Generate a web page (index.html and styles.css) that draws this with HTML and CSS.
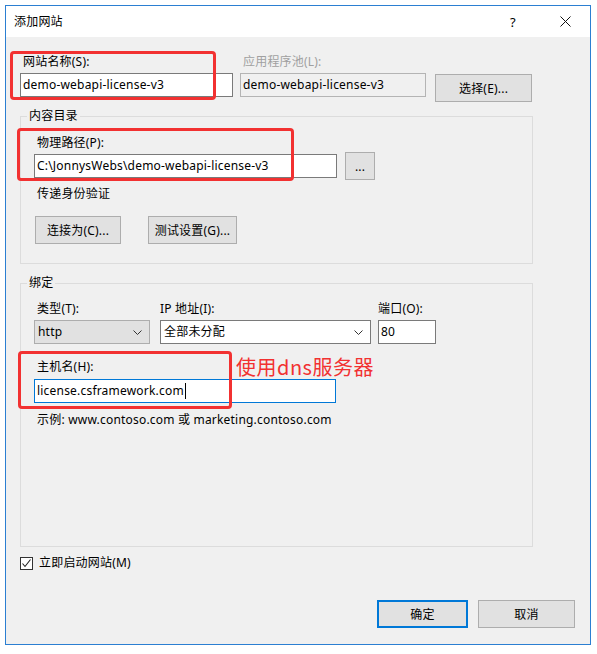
FILE: index.html
```html
<!DOCTYPE html>
<html lang="zh-CN">
<head>
    <meta charset="UTF-8">
    <title>添加网站</title>
    <link rel="stylesheet" href="styles.css">
</head>
<body>
    <div class="window">
        <div class="titlebar">
            <span class="title">添加网站</span>
            <span class="help">?</span>
            <span class="close">
                <svg width="11" height="11" viewBox="0 0 11 11"><path d="M0.5 0.5 L10.5 10.5 M10.5 0.5 L0.5 10.5" stroke="#111" stroke-width="1" fill="none"/></svg>
            </span>
        </div>

        <div class="dialog-body">
            <!-- site name / app pool -->
            <div class="site-row">
                <div class="field name-field">
                    <div class="label">网站名称(S):</div>
                    <div class="textbox">demo-webapi-license-v3</div>
                </div>
                <div class="field pool-field">
                    <div class="label disabled">应用程序池(L):</div>
                    <div class="textbox readonly">demo-webapi-license-v3</div>
                </div>
                <button class="btn select-btn">选择(E)...</button>
            </div>

            <!-- content directory -->
            <fieldset class="group content-group">
                <legend>内容目录</legend>
                <div class="group-inner">
                    <div class="label">物理路径(P):</div>
                    <div class="path-row">
                        <div class="textbox path-box">C:\JonnysWebs\demo-webapi-license-v3</div>
                        <button class="btn browse-btn">...</button>
                    </div>
                    <div class="label pass-label">传递身份验证</div>
                    <div class="auth-row">
                        <button class="btn connect-btn">连接为(C)...</button>
                        <button class="btn test-btn">测试设置(G)...</button>
                    </div>
                </div>
            </fieldset>

            <!-- binding -->
            <fieldset class="group binding-group">
                <legend>绑定</legend>
                <div class="group-inner">
                    <div class="binding-row">
                        <div class="field type-field">
                            <div class="label">类型(T):</div>
                            <div class="select grey">
                                <span>http</span>
                                <svg width="9" height="5" viewBox="0 0 9 5"><path d="M0.5 0.5 L4.5 4.5 L8.5 0.5" stroke="#333" fill="none"/></svg>
                            </div>
                        </div>
                        <div class="field ip-field">
                            <div class="label">IP 地址(I):</div>
                            <div class="select">
                                <span>全部未分配</span>
                                <svg width="9" height="5" viewBox="0 0 9 5"><path d="M0.5 0.5 L4.5 4.5 L8.5 0.5" stroke="#333" fill="none"/></svg>
                            </div>
                        </div>
                        <div class="field port-field">
                            <div class="label">端口(O):</div>
                            <div class="textbox">80</div>
                        </div>
                    </div>
                    <div class="label host-label">主机名(H):</div>
                    <div class="textbox host-box focused">license.csframework.com<span class="caret"></span></div>
                    <div class="label example">示例: www.contoso.com 或 marketing.contoso.com</div>
                </div>
            </fieldset>

            <label class="check-row">
                <span class="checkbox">
                    <svg width="11" height="11" viewBox="0 0 11 11"><path d="M1.5 5.5 L4 8.5 L9.5 1.5" stroke="#222" stroke-width="1.1" fill="none"/></svg>
                </span>
                立即启动网站(M)
            </label>

            <div class="footer">
                <button class="btn ok-btn">确定</button>
                <button class="btn cancel-btn">取消</button>
            </div>
        </div>

        <!-- annotations -->
        <div class="mark mark-name"></div>
        <div class="mark mark-path"></div>
        <div class="mark mark-host"></div>
        <div class="note">使用dns服务器</div>
    </div>
</body>
</html>
```

FILE: styles.css
```css
* {
    box-sizing: border-box;
}

body {
    margin: 0;
    padding: 5px;
    background: #ffffff;
    font-family: "Noto Sans", "Noto Sans CJK SC", sans-serif;
    font-size: 12px;
    line-height: 16px;
    letter-spacing: 0.2px;
    color: #000;
}

/* Window frame */
.window {
    position: relative;
    width: 586px;
    height: 640px;
    border: 1px solid #2b7fd2;
    background: #f0f0f0;
}

.titlebar {
    height: 31px;
    background: #ffffff;
    display: flex;
    align-items: center;
    padding-left: 8px;
}

.title {
    flex: 1;
}

.help {
    width: 12px;
    margin-right: 38px;
    font-size: 13px;
}

.close {
    display: flex;
    margin-right: 19px;
}

.dialog-body {
    padding: 17px 0 0 14px;
}

.label {
    height: 16px;
    white-space: nowrap;
}

.label.disabled {
    color: #a0a0a0;
}

/* Text boxes */
.textbox {
    height: 24px;
    border: 1px solid #7a7a7a;
    background: #ffffff;
    padding: 0 2px;
    display: flex;
    align-items: center;
    white-space: nowrap;
}

.textbox.readonly {
    background: #f0f0f0;
    border-color: #b4b4b4;
}

.textbox.focused {
    border-color: #0078d7;
}

.caret {
    width: 1px;
    height: 16px;
    background: #000;
    margin-left: 1px;
}

/* Buttons */
.btn {
    height: 28px;
    border: 1px solid #adadad;
    background: #e1e1e1;
    font-family: inherit;
    font-size: 12px;
    letter-spacing: 0.2px;
    color: #000;
    padding: 0;
}

/* Top row */
.site-row {
    display: flex;
    align-items: flex-start;
}

.field .label {
    margin-bottom: 3px;
    padding-left: 3px;
}

.name-field {
    width: 213px;
}

.pool-field {
    width: 186px;
    margin-left: 7px;
}

.select-btn {
    width: 97px;
    margin-left: 9px;
    margin-top: 20px;
}

/* Group boxes */
.group {
    margin: 6px 0 0 0;
    width: 513px;
    border: 1px solid #dcdcdc;
    padding: 11px 0 19px 6px;
    min-width: 0;
}

.group legend {
    padding: 0 2px;
    height: 16px;
}

.group-inner {
    padding-left: 7px;
}

.group-inner > .label {
    padding-left: 3px;
}

.content-group .group-inner > .label:first-child {
    margin-bottom: 1px;
}

.path-row {
    display: flex;
    align-items: center;
}

.path-box {
    width: 303px;
}

.browse-btn {
    width: 30px;
    margin-left: 8px;
}

.pass-label {
    margin-top: 6px;
}

.auth-row {
    display: flex;
    margin-top: 14px;
}

.connect-btn {
    width: 86px;
    margin-left: 1px;
}

.test-btn {
    width: 89px;
    margin-left: 27px;
}

.binding-group {
    margin-top: 11px;
    padding-top: 10px;
    padding-bottom: 118px;
}

.binding-row {
    display: flex;
}

.select {
    height: 24px;
    border: 1px solid #7a7a7a;
    background: #ffffff;
    display: flex;
    align-items: center;
    justify-content: space-between;
    padding: 0 7px 0 3px;
}

.select.grey {
    background: #e1e1e1;
    border-color: #adadad;
}

.type-field {
    width: 116px;
}

.ip-field {
    width: 211px;
    margin-left: 10px;
}

.ip-field .label {
    padding-left: 0;
}

.port-field {
    width: 58px;
    margin-left: 7px;
}

.port-field .label {
    padding-left: 0;
}

.host-label {
    margin-top: 15px;
    margin-bottom: 4px;
}

.host-box {
    width: 302px;
}

.example {
    margin-top: 9px;
}

/* Checkbox */
.check-row {
    display: flex;
    align-items: center;
    height: 16px;
    margin-top: 8px;
}

.checkbox {
    width: 13px;
    height: 13px;
    border: 1px solid #333;
    background: #ffffff;
    display: flex;
    align-items: center;
    justify-content: center;
    margin-right: 6px;
}

/* Footer */
.footer {
    display: flex;
    justify-content: flex-end;
    margin-top: 29px;
    margin-right: 15px;
}

.ok-btn {
    width: 91px;
    border: 2px solid #0078d7;
}

.cancel-btn {
    width: 97px;
    margin-left: 10px;
}

/* Red annotation overlays */
.mark {
    position: absolute;
    border: 3px solid #f23131;
    border-radius: 4px;
}

.mark-name {
    left: 4px;
    top: 45px;
    width: 206px;
    height: 49px;
}

.mark-path {
    left: 11px;
    top: 122px;
    width: 277px;
    height: 53px;
}

.mark-host {
    left: 12px;
    top: 345px;
    width: 214px;
    height: 58px;
}

.note {
    position: absolute;
    left: 230px;
    top: 348px;
    font-family: "Noto Sans CJK SC", sans-serif;
    font-size: 20px;
    line-height: 26px;
    letter-spacing: 0.5px;
    color: #f23131;
}
```
